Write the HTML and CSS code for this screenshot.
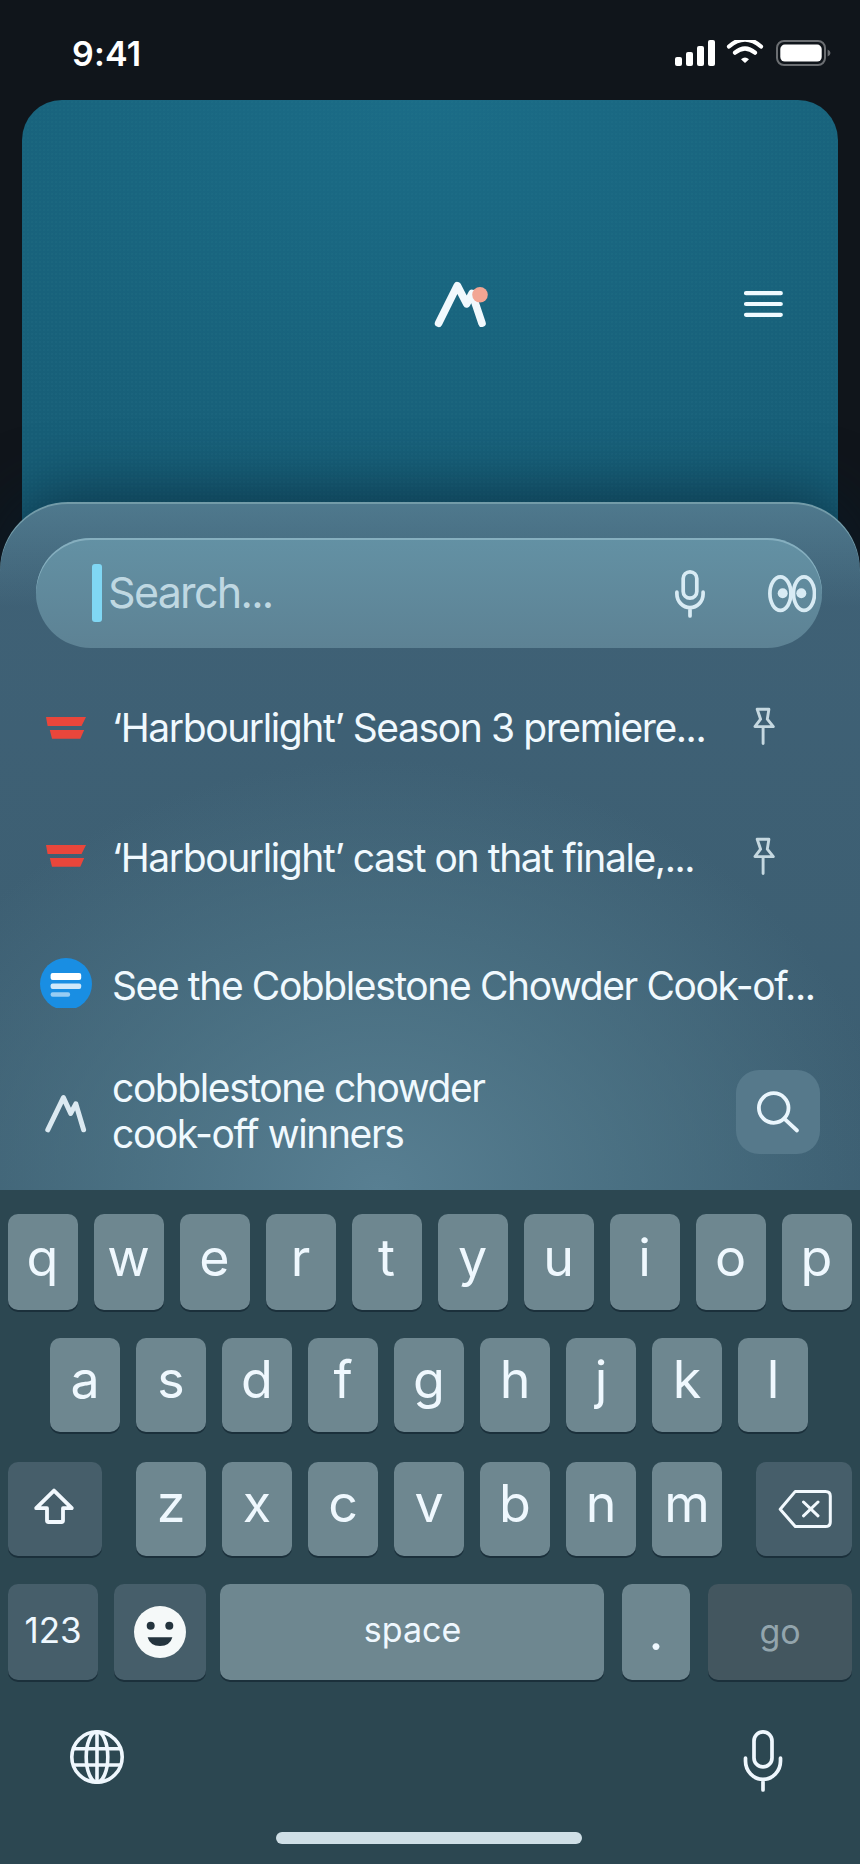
FILE: index.html
```html
<!DOCTYPE html>
<html lang="en">
<head>
<meta charset="utf-8">
<title>Search</title>
<link rel="stylesheet" href="styles.css">
</head>
<body>
<div class="phone">
  <header class="status">
    <span class="time">9:41</span>
    <svg class="status-icons" width="156" height="28" viewBox="675 39 156 28" fill="#fff">
      <rect x="675" y="57" width="7" height="9" rx="2"/>
      <rect x="686" y="52" width="7" height="14" rx="2"/>
      <rect x="697" y="46" width="7" height="20" rx="2"/>
      <rect x="708" y="40" width="7" height="26" rx="2"/>
      <svg x="726" y="40" width="38" height="25" viewBox="726 40 38 25">
        <path d="M729 46.5Q745 32.5 761 46.5M735 52.7Q745 44.2 755 52.7" fill="none" stroke="#fff" stroke-width="4.2" stroke-linecap="round"/>
        <path d="M741 59.2Q745 56 749 59.2L745.6 62.5Q745 63 744.4 62.5Z"/>
      </svg>
      <rect x="777" y="41" width="48" height="24" rx="7" fill="none" stroke="#6b6e72" stroke-width="2"/>
      <rect x="780.3" y="44.6" width="41.4" height="17" rx="4.5"/>
      <path d="M827.6 49.5Q830.5 50.5 830.5 53T827.6 56.5Z" fill="#6b6e72"/>
    </svg>
  </header>
  <section class="card">
    <svg class="logo" width="56" height="50" viewBox="433 279 56 50">
      <path d="M438.6 323.2 457.3 285.6 466.7 303.8 472 293.5 482 323.2" fill="none" stroke="#f1f9fd" stroke-width="7.6" stroke-linecap="round" stroke-linejoin="round"/>
      <circle cx="480" cy="294.8" r="7.8" fill="#f2a593"/>
    </svg>
    <svg class="menu" width="40" height="28" viewBox="743 290 40 28">
      <path d="M746 293.2H780.8M746 304H780.8M746 314.8H780.8" stroke="#effaff" stroke-width="4.2" stroke-linecap="round"/>
    </svg>
  </section>
  <main class="sheet">
    <div class="search">
      <span class="caret"></span>
      <span class="placeholder">Search...</span>
      <svg class="search-icons" width="142" height="52" viewBox="674 567 142 52" fill="none" stroke="#d8ebf4" stroke-width="3.7" stroke-linecap="round">
        <rect x="683.2" y="571.8" width="13.6" height="26.4" rx="6.8"/>
        <path d="M676.9 592.2V594A13.1 13.6 0 0 0 703.1 594V592.2M690 608V616"/>
        <ellipse cx="780.4" cy="593.6" rx="10.5" ry="16.7"/>
        <ellipse cx="804" cy="593.6" rx="10.5" ry="16.7"/>
        <circle cx="782.7" cy="593.3" r="5" fill="#d8ebf4" stroke="none"/>
        <circle cx="801.3" cy="593.3" r="5" fill="#d8ebf4" stroke="none"/>
      </svg>
    </div>
    <ul class="results">
      <li class="row">
        <svg class="src" width="60" height="52" viewBox="36 702 60 52" fill="#e9463b"><path d="M46 717H86L81.5 726H47.6ZM49.8 730H84.2L80.3 738.8H52Z"/></svg>
        <span class="text t1">‘Harbourlight’ Season 3 premiere...</span>
        <svg class="pin" width="26" height="40" viewBox="750.4 706 26 40" fill="none" stroke="#c5d8e0" stroke-width="2.9" stroke-linejoin="round" stroke-linecap="round"><path d="M757.6 709.2H769.3L767.7 719.2 773.7 726.6H755.3L761 719.2ZM763.5 727V743.5"/></svg>
      </li>
      <li class="row row2">
        <svg class="src" width="60" height="52" viewBox="36 704 60 52" fill="#e9463b"><path d="M46 717H86L81.5 726H47.6ZM49.8 730H84.2L80.3 738.8H52Z"/></svg>
        <span class="text t2">‘Harbourlight’ cast on that finale,...</span>
        <svg class="pin" width="26" height="40" viewBox="750.4 706 26 40" fill="none" stroke="#c5d8e0" stroke-width="2.9" stroke-linejoin="round" stroke-linecap="round"><path d="M757.6 709.2H769.3L767.7 719.2 773.7 726.6H755.3L761 719.2ZM763.5 727V743.5"/></svg>
      </li>
      <li class="row row3">
        <svg class="src" width="60" height="52" viewBox="36 956 60 52"><circle cx="66" cy="984" r="26" fill="#198ee3"/><rect x="50.6" y="973" width="30.6" height="7" rx="2" fill="#fff"/><rect x="50.6" y="983.6" width="30.6" height="5.4" rx="2" fill="#cfe8fa"/><rect x="50.6" y="992.3" width="19.5" height="4.5" rx="2" fill="#98cdf4"/></svg>
        <span class="text t3">See the Cobblestone Chowder Cook-of...</span>
      </li>
      <li class="row row4">
        <svg class="src" width="60" height="52" viewBox="36 1086 60 52" fill="none" stroke="#dbe9f1" stroke-width="5" stroke-linecap="round" stroke-linejoin="round"><path d="M47.8 1129.8 63.4 1097.6 70.7 1113.4 75.8 1103.8 83.6 1129.8"/></svg>
        <span class="text t4">cobblestone chowder<br>cook-off winners</span>
        <span class="go-search"><svg width="84" height="84" viewBox="736 1070 84 84" fill="none" stroke="#eaf6fd" stroke-width="3.8" stroke-linecap="round"><circle cx="773.7" cy="1108" r="14.8"/><path d="M784.5 1118.8 797 1130.5"/></svg></span>
      </li>
    </ul>
  </main>
  <section class="keyboard">
    <div class="keys r1"><b class="key">q</b><b class="key">w</b><b class="key">e</b><b class="key">r</b><b class="key">t</b><b class="key">y</b><b class="key">u</b><b class="key">i</b><b class="key">o</b><b class="key">p</b></div>
    <div class="keys r2"><b class="key">a</b><b class="key">s</b><b class="key">d</b><b class="key">f</b><b class="key">g</b><b class="key">h</b><b class="key">j</b><b class="key">k</b><b class="key">l</b></div>
    <div class="keys r3">
      <b class="key dark shift"><svg width="94" height="94" viewBox="8 1462 94 94" fill="none" stroke="#f2f9fe" stroke-width="3.8" stroke-linejoin="round"><path d="M54 1490.6 71.8 1508.2H63V1520.5Q63 1522 61.5 1522H48.5Q47 1522 47 1520.5V1508.2H36.2Z"/></svg></b>
      <b class="key">z</b><b class="key">x</b><b class="key">c</b><b class="key">v</b><b class="key">b</b><b class="key">n</b><b class="key">m</b>
      <b class="key dark back"><svg width="96" height="94" viewBox="756 1462 96 94" fill="none" stroke="#f2f9fe" stroke-width="3" stroke-linejoin="round" stroke-linecap="round"><path d="M795.3 1491.4H825.5Q830.3 1491.4 830.3 1496V1522Q830.3 1526.6 825.5 1526.6H795.3L780.2 1509.2ZM803.5 1502 818 1515.8M818 1502 803.5 1515.8"/></svg></b>
    </div>
    <div class="keys r4">
      <b class="key dark num">123</b>
      <b class="key dark emoji"><svg width="92" height="96" viewBox="114 1584 92 96"><circle cx="160" cy="1632" r="26" fill="#f5f9f9"/><circle cx="150.7" cy="1625.8" r="4" fill="#24343e"/><circle cx="169.3" cy="1625.8" r="4" fill="#24343e"/><path d="M147.6 1637.3H172.4Q170 1646 160 1646T147.6 1637.3Z" fill="#24343e"/></svg></b>
      <b class="key space">space</b>
      <b class="key dot">.</b>
      <b class="key dark go">go</b>
    </div>
    <div class="tools">
      <svg width="56" height="64" viewBox="69 1729 56 64" fill="none" stroke="#eff7fd" stroke-width="3.6"><circle cx="97" cy="1757" r="25.2"/><ellipse cx="97" cy="1757" rx="10.8" ry="25.2"/><path d="M97 1732V1782M73.5 1748.7H120.5M73.5 1765H120.5"/></svg>
      <svg width="42" height="64" viewBox="742 1729 42 64" fill="none" stroke="#eff7fd" stroke-width="3.7" stroke-linecap="round"><rect x="754" y="1731.9" width="18" height="35" rx="9"/><path d="M745.5 1758V1761A17.5 18.4 0 0 0 780.5 1761V1758M763 1780V1790"/></svg>
    </div>
    <div class="home"></div>
  </section>
</div>
</body>
</html>
```
FILE: styles.css
```css
* { box-sizing: border-box; }
body { margin: 0; background: #10151b; font-family: Inter, "Liberation Sans", sans-serif; }
svg { display: block; flex: none; }
.phone { width: 860px; height: 1864px; overflow: hidden; display: flex; flex-direction: column; background: #10151b; }
.status { height: 100px; flex: none; padding: 39px 29px 0 72px; display: flex; justify-content: space-between; align-items: flex-start; }
.time { color: #fff; font-size: 34px; line-height: 30px; font-weight: 560; letter-spacing: .2px; }
.card { height: 470px; flex: none; margin: 0 22px; border-radius: 40px 40px 0 0; padding: 179px 55px 0 411px; display: flex; justify-content: space-between; align-items: flex-start;
  background:
    radial-gradient(circle at 50% 50%, rgba(50, 135, 150, .1) 0 0.7px, transparent 1.3px) 0 0 / 4px 4px,
    radial-gradient(ellipse 650px 420px at 50% 0, #1b6c87, #175e77); }
.menu { margin-top: 11px; }
.sheet { height: 688px; flex: none; margin-top: -68px; position: relative; border-radius: 68px 68px 0 0; padding: 36px 38px 0 36px;
  box-shadow: inset 0 2px 0 #739ba8, 0 -12px 60px rgba(5, 30, 45, .55);
  background:
    linear-gradient(180deg, rgba(95, 145, 165, .5), rgba(95, 145, 165, 0) 105px),
    radial-gradient(ellipse 520px 430px at 44% 100%, #587f92, rgba(80, 120, 138, .65) 50%, rgba(80, 120, 138, 0)),
    linear-gradient(180deg, #3f6176, #3c5e71); }
.search { height: 110px; width: 786px; border-radius: 55px; display: flex; align-items: center; padding: 0 6px 0 56px; background: linear-gradient(180deg, #6391a4, #5d8294); box-shadow: inset 0 2px 0 #86afbf; }
.caret { width: 10px; height: 58px; border-radius: 3px; background: #80d7f4; }
.placeholder { margin: -2px 0 0 6px; font-size: 43px; line-height: 58px; letter-spacing: -1.7px; color: #bfd8e2; }
.search-icons { margin-left: auto; }
.results { list-style: none; margin: 0; padding: 54px 0 0; }
.row { display: flex; align-items: flex-start; height: 130px; }
.row2 { height: 124px; }
.row3 { height: 130px; }
.text { margin-left: 16px; font-size: 39px; line-height: 46px; letter-spacing: -1.4px; color: #f0f9fe; white-space: nowrap; padding-top: 3px; }
.t3 { padding-top: 7px; }
.pin { margin: 4px 46px 0 auto; }
.go-search { margin: -16px 2px 0 auto; width: 84px; height: 84px; border-radius: 23px; background: #56798b; }
.row4 .text { margin-top: -24px; }
.keyboard { height: 674px; flex: none; position: relative; background: #2c4751; padding: 24px 8px 0; }
.keys { display: flex; gap: 16px; }
.key { width: 70px; height: 94px; flex: none; border-radius: 10px; background: #6e8790; box-shadow: 0 2px 0 #1b303b; color: #eff8fe; font-weight: 400; font-size: 52px; line-height: 84px; text-align: center; }
.r1 { height: 124px; }
.r1 .key { height: 96px; line-height: 88px; text-indent: -1px; }
.r2 { height: 124px; padding-left: 42px; }
.r3 { height: 122px; }
.r4 { gap: 0; }
.r4 .key { height: 96px; }
.key.dark { background: #465e6a; }
.r3 .shift { width: 94px; margin-right: 18px; }
.r3 .back { width: 96px; margin-left: 18px; }
.r4 .num { width: 90px; margin-right: 16px; font-size: 35px; line-height: 93px; }
.r4 .emoji { width: 92px; margin-right: 14px; }
.r4 .space { width: 384px; margin-right: 18px; font-size: 34px; line-height: 92px; text-indent: 1px; }
.r4 .dot { width: 68px; margin-right: 18px; line-height: 96px; }
.r4 .key.go { width: 144px; background: #43565f; color: #93a5ad; font-size: 34px; line-height: 96px; }
.tools { display: flex; justify-content: space-between; padding: 49px 68px 0 61px; }
.home { width: 306px; height: 12px; border-radius: 6px; background: #cfdfe6; margin: 39px 0 0 268px; }
```
